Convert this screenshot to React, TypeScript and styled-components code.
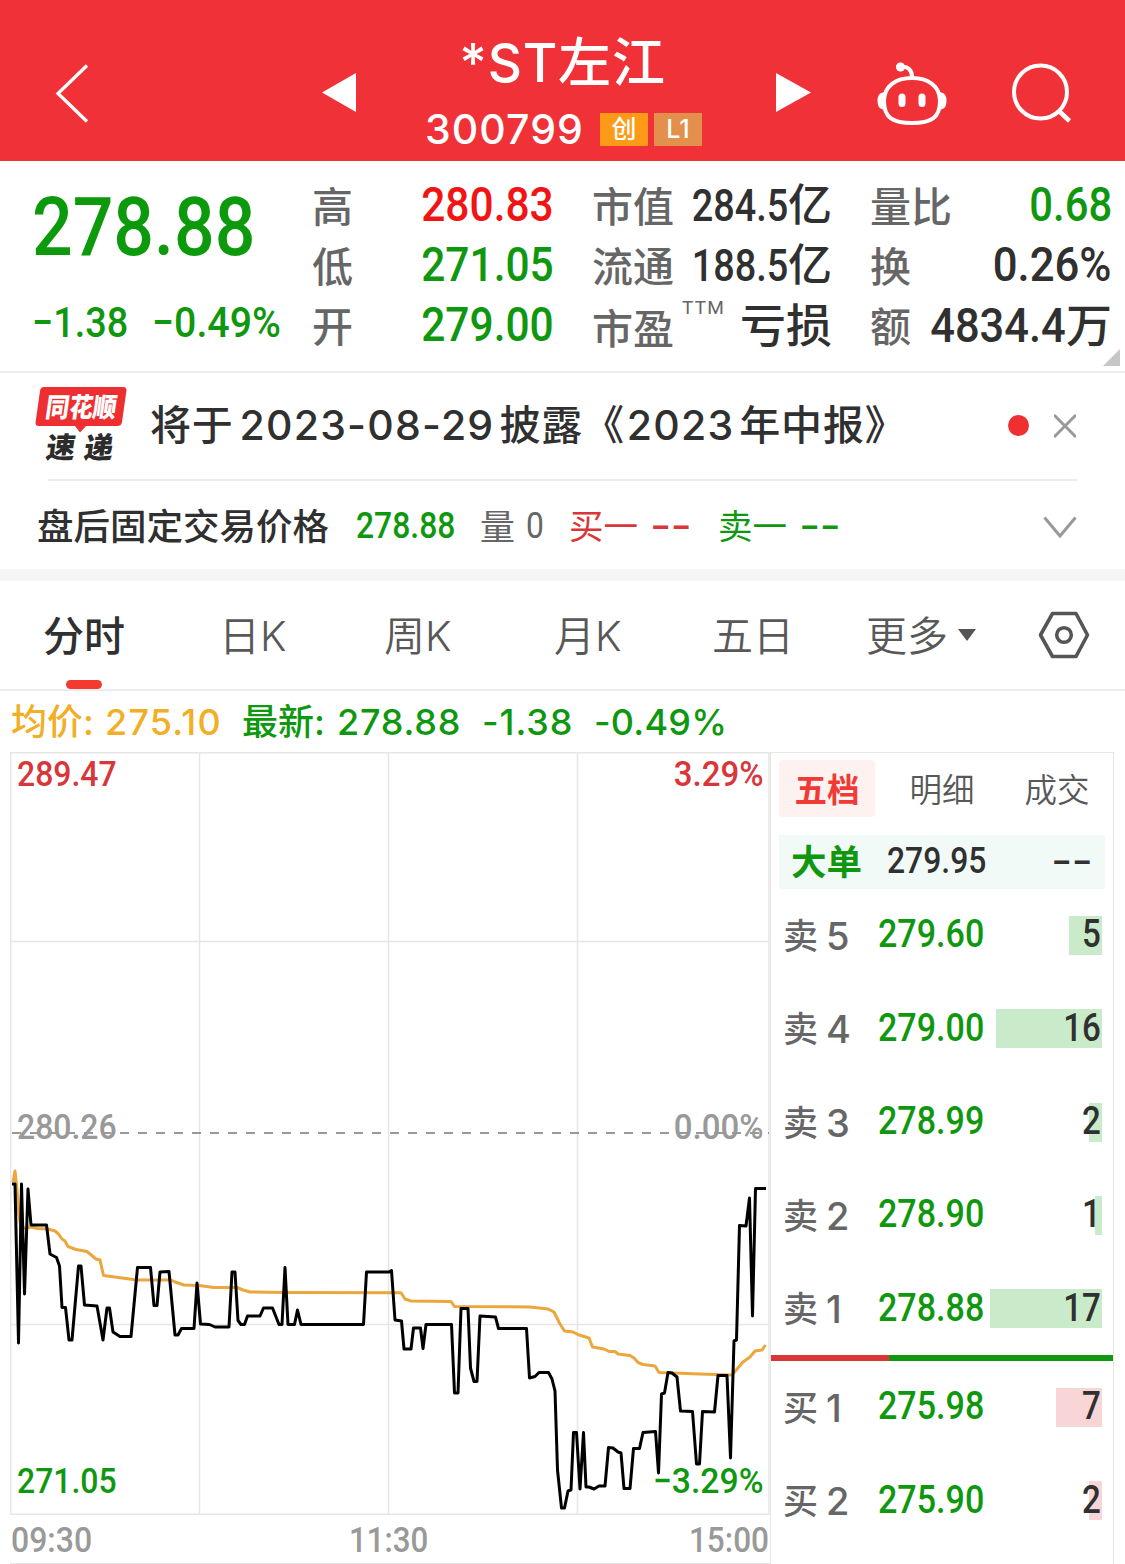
import React from "react";
import styled, { createGlobalStyle } from "styled-components";

const GREEN = "#0f980f";
const RED = "#d9363a";
const INK = "#303030";
const GRAY = "#666666";
const LINE = "#e6e6e6";
const DIN = `Roboto, "Noto Sans CJK SC", sans-serif`;
const SANS = `Inter, "Noto Sans CJK SC", sans-serif`;

const Global = createGlobalStyle`
  * { box-sizing: border-box; }
  body { margin: 0; background: #fff; }
  svg { display: block; flex: none; }
`;

const Screen = styled.main`
  width: 1125px;
  height: 1564px;
  overflow: hidden;
  display: flex;
  flex-direction: column;
  background: #fff;
  color: ${INK};
  font-family: ${SANS};
  white-space: nowrap;
`;

/* Condensed figures used for every quote value */
const Num = styled.span<{ $size: number; $color?: string; $right?: boolean; $sx?: number; $weight?: number }>`
  display: inline-block;
  font-family: ${DIN};
  font-weight: ${(p) => p.$weight ?? 500};
  font-size: ${(p) => p.$size}px;
  line-height: 1.2;
  color: ${(p) => p.$color ?? INK};
  transform: scaleX(${(p) => p.$sx ?? 0.885});
  transform-origin: ${(p) => (p.$right ? "right" : "left")} center;
`;

/* Header */
const Header = styled.header`
  height: 161px;
  flex: none;
  display: flex;
  align-items: flex-start;
  background: #f03138;
  color: #fff;
`;
const HeaderIcon = styled.div<{ $ml: number; $mt: number }>`
  margin: ${(p) => p.$mt}px 0 0 ${(p) => p.$ml}px;
`;
const TitleBlock = styled.div`
  width: 420px;
  display: flex;
  flex-direction: column;
  align-items: center;
  padding-top: 31px;
`;
const Title = styled.h1`
  margin: 0 7px 0 0;
  font-weight: 500;
  font-size: 53px;
  line-height: 64px;
  letter-spacing: 0.8px;
`;
const CodeRow = styled.div`
  display: flex;
  align-items: center;
  height: 34px;
  margin-top: 17px;
  padding-left: 1px;
`;
const Code = styled.span`
  font-size: 41px;
  font-weight: 500;
  letter-spacing: 1.1px;
  margin-right: 16px;
`;
const Badge = styled.span<{ $bg: string }>`
  width: 48px;
  height: 33px;
  margin-right: 6px;
  display: flex;
  align-items: center;
  justify-content: center;
  background: ${(p) => p.$bg};
  font-size: 25px;
  font-weight: 500;
  line-height: 32px;
  padding-bottom: 1px;
`;

/* Quote summary */
const Quote = styled.section`
  height: 212px;
  flex: none;
  position: relative;
  display: grid;
  grid-template-columns: 281px 241px 39px 239px 39px 241px;
  padding: 14px 13px 0 32px;
  border-bottom: 2px solid #ececec;
`;
const PriceCol = styled.div`
  display: flex;
  flex-direction: column;
`;
const BigPrice = styled.div`
  height: 96px;
  padding-top: 3px;
`;
const ChangeRow = styled.div`
  display: flex;
  height: 90px;
  align-items: center;
  padding-top: 14px;
`;
const ChangeCell = styled.span<{ $w: number }>`
  width: ${(p) => p.$w}px;
`;
const StatCol = styled.dl<{ $start: number }>`
  grid-column: ${(p) => p.$start};
  margin: 0;
  display: grid;
  grid-template-rows: repeat(3, 60px);
`;
const StatRow = styled.div`
  display: flex;
  align-items: center;
  justify-content: space-between;
`;
const StatLabel = styled.dt<{ $drop?: boolean }>`
  font-size: 41px;
  line-height: 60px;
  font-weight: 500;
  color: ${GRAY};
  display: flex;
  margin-left: -1px;
  padding-top: ${(p) => (p.$drop ? 7 : 3)}px;
`;
const Ttm = styled.span`
  font-family: ${DIN};
  font-weight: 400;
  font-size: 19px;
  line-height: 22px;
  letter-spacing: 1.2px;
  margin: -2px 0 0 8px;
`;
const StatValue = styled.dd`
  margin: 0;
  display: flex;
  align-items: baseline;
  line-height: 60px;
`;
const Unit = styled.span<{ $size: number }>`
  font-size: ${(p) => p.$size}px;
  line-height: 58px;
  font-weight: 500;
`;
const Corner = styled.i`
  position: absolute;
  right: 5px;
  bottom: 5px;
  border-style: solid;
  border-width: 0 0 17px 17px;
  border-color: transparent transparent #c6c6c6 transparent;
`;

/* News and after-hours strips */
const News = styled.section`
  height: 106px;
  flex: none;
  display: flex;
  align-items: center;
  padding: 0 0 1px 35px;
`;
const NewsText = styled.p`
  margin: -2px 0 0 3px;
  width: 834px;
  font-size: 41px;
  line-height: 60px;
  font-weight: 500;
  letter-spacing: 0.8px;
`;
const Figures = styled.span<{ $before: number; $after: number }>`
  margin: 0 ${(p) => p.$after}px 0 ${(p) => p.$before}px;
  letter-spacing: 1.2px;
`;
const Dot = styled.i`
  width: 21px;
  height: 21px;
  margin: 0 25px 0 24px;
  border-radius: 50%;
  background: #ee3030;
`;
const Divider = styled.hr`
  width: 1029px;
  height: 2px;
  flex: none;
  margin: 0 0 0 48px;
  border: 0;
  background: #ececec;
`;
const AfterHours = styled.section`
  height: 88px;
  flex: none;
  display: flex;
  align-items: center;
  padding: 4px 0 0 37px;
`;
const Strip = styled.span<{ $w: number; $size: number; $color?: string; $weight?: number }>`
  width: ${(p) => p.$w}px;
  display: flex;
  align-items: center;
  font-size: ${(p) => p.$size}px;
  line-height: 60px;
  font-weight: ${(p) => p.$weight ?? 500};
  color: ${(p) => p.$color ?? INK};
`;
const Dashes = styled.span<{ $w: number; $color: string }>`
  width: ${(p) => p.$w}px;
  display: flex;
  color: ${(p) => p.$color};
  font-family: ${DIN};
  font-size: 36px;
  font-weight: 500;
  letter-spacing: 0.5px;
  transform: scaleX(1.6);
  transform-origin: left center;
`;
const Band = styled.div`
  height: 12px;
  flex: none;
  background: #f5f5f5;
`;

/* Period tabs */
const Tabs = styled.nav`
  height: 110px;
  flex: none;
  display: flex;
  padding-left: 43px;
  border-bottom: 2px solid #ececec;
`;
const Tab = styled.div<{ $w: number; $active?: boolean }>`
  width: ${(p) => p.$w}px;
  height: 108px;
  font-size: 41px;
  line-height: 111px;
  font-weight: ${(p) => (p.$active ? 500 : 350)};
  color: ${(p) => (p.$active ? INK : "#585858")};
  display: flex;
`;
const TabLabel = styled.span<{ $active?: boolean }>`
  position: relative;
  height: 108px;
  &::after {
    content: "";
    display: ${(p) => (p.$active ? "block" : "none")};
    position: absolute;
    left: 23px;
    bottom: 0;
    width: 36px;
    height: 9px;
    border-radius: 4.5px;
    background: #f43a30;
  }
`;
const Caret = styled.i`
  margin: 48px 0 0 10px;
  width: 0;
  height: 0;
  border: 9.5px solid transparent;
  border-top: 12px solid #555;
  border-bottom: 0;
`;
const Gear = styled.div`
  padding-top: 30px;
`;

const Legend = styled.div`
  height: 61px;
  flex: none;
  display: flex;
  align-items: center;
  padding-left: 11px;
  font-size: 36px;
  line-height: 60px;
  font-weight: 500;
`;
const LegendItem = styled.span<{ $w: number; $color?: string; $ls?: number }>`
  width: ${(p) => p.$w}px;
  letter-spacing: ${(p) => p.$ls ?? 0}px;
  color: ${(p) => p.$color ?? GREEN};
`;

/* Chart and order book */
const Body = styled.section`
  flex: 1;
  display: flex;
  padding-left: 10px;
`;
const ChartCol = styled.div`
  width: 761px;
  display: flex;
  flex-direction: column;
  border-right: 1px solid ${LINE};
`;
const Plot = styled.div`
  position: relative;
  height: 763px;
`;
const AxisLabel = styled.div<{ $top: number; $right?: boolean }>`
  position: absolute;
  top: ${(p) => p.$top}px;
  ${(p) => (p.$right ? "right: 6px;" : "left: 7px;")}
`;
const Times = styled.div`
  height: 49px;
  display: grid;
  grid-template-columns: 1fr 1fr 1fr;
  align-items: center;
  padding: 3px 1px 0 1px;
  border-bottom: 1px solid ${LINE};
`;
const Time = styled.span<{ $align: string }>`
  text-align: ${(p) => p.$align};
  padding-left: ${(p) => (p.$align === "center" ? 9 : 0)}px;
`;
const Book = styled.aside`
  width: 343px;
  border-top: 1px solid ${LINE};
  border-right: 1px solid ${LINE};
  display: flex;
  flex-direction: column;
`;
const BookTabs = styled.div`
  display: flex;
  margin: 7px 0 0 8px;
  height: 57px;
  flex: none;
`;
const BookTab = styled.span<{ $w: number; $active?: boolean }>`
  width: ${(p) => p.$w}px;
  height: 57px;
  border-radius: 4px;
  text-align: center;
  font-size: 32.5px;
  line-height: 61px;
  font-weight: ${(p) => (p.$active ? 700 : 350)};
  color: ${(p) => (p.$active ? "#f03a35" : "#585858")};
  background: ${(p) => (p.$active ? "#fef2f1" : "transparent")};
`;
const BigOrder = styled.div`
  margin: 18px 0 0 8px;
  width: 326px;
  height: 54px;
  flex: none;
  display: flex;
  align-items: center;
  padding: 0 14px 0 12px;
  background: #f1faf6;
`;
const BigOrderLabel = styled.span`
  width: 96px;
  font-size: 35.5px;
  line-height: 54px;
  padding-top: 2px;
  font-weight: 700;
  color: ${GREEN};
`;
const BigOrderPrice = styled.span`
  flex: 1;
`;
const Levels = styled.div<{ $top: number; $h: number }>`
  padding-top: ${(p) => p.$top}px;
  height: ${(p) => p.$h}px;
  flex: none;
`;
const Level = styled.div`
  height: 93.3px;
  display: flex;
  align-items: flex-start;
  padding-left: 12px;
`;
const LevelLabel = styled.span`
  width: 95px;
  font-size: 35px;
  line-height: 41px;
  color: ${GRAY};
  font-weight: 500;
  display: flex;
  gap: 8px;
`;
const LevelNo = styled.span`
  font-size: 38px;
`;
const LevelPrice = styled.span`
  width: 111px;
  height: 37px;
  display: flex;
  align-items: center;
`;
const Depth = styled.span`
  width: 113px;
  height: 39px;
  display: flex;
  justify-content: flex-end;
`;
const DepthBar = styled.span<{ $sell: boolean }>`
  height: 39px;
  display: flex;
  align-items: center;
  justify-content: flex-end;
  padding: 0 1px 2px 0;
  background: ${(p) => (p.$sell ? "#c9ebc9" : "#f8d5d7")};
`;
const Ratio = styled.div`
  height: 6px;
  flex: none;
  background: linear-gradient(90deg, ${RED} 118px, ${GREEN} 118px);
`;

const PRICE =
  "12,1184 15,1184 18.5,1343 21.5,1184 24.5,1294 28,1189 31,1225 46.5,1225 50,1254 56.5,1257.5 59.5,1266 62,1307.5 65.5,1307.5 69,1340 72,1340 78.5,1266 81,1266 84.5,1305 97,1306 103,1340 107,1308 109.5,1308 113,1332 120,1336.5 131,1336.5 137.5,1267.5 150.5,1267.5 154,1305.5 157,1305.5 160,1272 169,1271.5 175,1335 178,1335 181.5,1328.5 194,1328.5 197,1283 200.5,1324 209.5,1324.5 215,1327 229,1327 232,1272 235,1272 238,1320.5 241,1324.5 244.5,1324.5 247.5,1316 260,1316 263.5,1308 272.5,1308 279,1324.5 282,1324.5 285,1267.5 288,1324.5 294.5,1324.5 297.5,1310 301,1324.5 363.5,1324.5 366.5,1272 389,1272 391.5,1270.5 395,1320 401.5,1321 404,1349 411,1349 413.5,1328 420.5,1328 423,1348.5 426,1324.5 451.5,1324.5 454.5,1393 458,1393 461,1308.5 468,1308.5 470.5,1368 474,1381.5 477,1381.5 480,1316 495.5,1317 498.5,1328.5 526.5,1328.5 529.5,1378 535,1376.5 539,1372.5 548.5,1372.5 552,1379 555,1391 557.5,1470 561.5,1508 564.5,1508 568,1491 571,1490 573.5,1432.5 576.5,1432.5 580,1489 583.5,1432.5 586,1487 589,1487 594,1489 599,1486 605,1486 608.5,1447.5 613,1448 618,1452 621,1453 624,1488.5 630,1488.5 633.5,1448.5 639.5,1448.5 643,1432.5 655.5,1431.5 658.5,1473 661.5,1394 664.5,1393 668,1372.5 672,1373 677,1377 680.5,1411 692.5,1411.5 696.5,1464 699.5,1464 702.5,1411.5 714.5,1412 718,1375.5 727,1375.5 730.5,1458 734,1341 736.5,1340 739.5,1225.5 746,1226 749.5,1198 752.5,1316 755.5,1188.5 766,1188.5";
const AVERAGE =
  "13,1182 15,1171 17,1190 19,1215 21,1228 27,1228 30,1227 38,1228.5 48,1229 55,1231 58.5,1234 62,1239 65,1241 68,1246.5 76,1249.5 87,1251.5 96,1259 100,1260 103.5,1275.5 137,1280 171,1280 175,1282 184,1285 199,1285.5 214,1287.5 237,1287.5 243,1290 250,1292 285,1292.5 401,1292.7 405,1299 411,1301 451,1301.5 454.5,1306.5 530,1307 548,1309 554,1312 560,1324 564.5,1331 573,1332 579,1335 589,1338 592.5,1347 604,1349 609,1351.5 615,1351.5 618,1354 630,1355.5 634,1358 638,1362.5 643,1364.5 655,1366 659,1372.5 700,1374 732,1375 743,1362 750,1357 755,1351 762,1350 765.5,1345";

const SELLS = [
  { no: 5, price: "279.60", lots: 5 },
  { no: 4, price: "279.00", lots: 16 },
  { no: 3, price: "278.99", lots: 2 },
  { no: 2, price: "278.90", lots: 1 },
  { no: 1, price: "278.88", lots: 17 },
];
const BUYS = [
  { no: 1, price: "275.98", lots: 7 },
  { no: 2, price: "275.90", lots: 2 },
];

function BookLevel({ side, no, price, lots }: { side: "卖" | "买"; no: number; price: string; lots: number }) {
  return (
    <Level>
      <LevelLabel>
        {side}
        <LevelNo>{no}</LevelNo>
      </LevelLabel>
      <LevelPrice>
        <Num $size={38.5} $color={GREEN} $sx={0.885}>{price}</Num>
      </LevelPrice>
      <Depth>
        <DepthBar $sell={side === "卖"} style={{ width: lots * 6.6 }}>
          <Num $size={38.5} $sx={0.86} $right>{lots}</Num>
        </DepthBar>
      </Depth>
    </Level>
  );
}

function Stat({ label, children, sup }: { label: string; children: React.ReactNode; sup?: string }) {
  return (
    <StatRow>
      <StatLabel $drop={!!sup}>
        {label}
        {sup && <Ttm>{sup}</Ttm>}
      </StatLabel>
      <StatValue>{children}</StatValue>
    </StatRow>
  );
}

function NewsLogo() {
  return (
    <svg width="112" height="94" viewBox="35 379 112 94">
      <path d="M44 387H123q4 0 3.400 4L122 422q-.6 4-4.600 4H86l-6 6.500-5-6.500H39q-4 0-3.400-4L40 391q.6-4 4-4z" fill="#ee2f31" />
      <g fontFamily='"Noto Sans CJK SC", sans-serif' fontWeight="900">
        <text transform="translate(44.500 416.500) skewX(-8)" fontSize="27" textLength="71" lengthAdjust="spacingAndGlyphs" fill="#fff">同花顺</text>
        <text transform="translate(45 458) skewX(-8)" fontSize="29" textLength="67" lengthAdjust="spacing" fill="#2c2c2c">速递</text>
      </g>
    </svg>
  );
}

export default function App() {
  return (
    <Screen>
      <Global />
      <Header>
        <HeaderIcon $ml={54} $mt={62}>
          <svg width="36" height="62" viewBox="54 62 36 62" fill="none" stroke="#fff" strokeWidth="3.300">
            <path d="M87 65.500 58 93.500 87 121.500" />
          </svg>
        </HeaderIcon>
        <HeaderIcon $ml={232} $mt={73}>
          <svg width="34" height="39" viewBox="0 0 34 39"><path d="M0 19.500 34 0V39z" fill="#fff" /></svg>
        </HeaderIcon>
        <TitleBlock>
          <Title>*ST左江</Title>
          <CodeRow>
            <Code>300799</Code>
            <Badge $bg="#fd9a18">创</Badge>
            <Badge $bg="#e2904b">L1</Badge>
          </CodeRow>
        </TitleBlock>
        <HeaderIcon $ml={0} $mt={73}>
          <svg width="35" height="39" viewBox="0 0 35 39"><path d="M35 19.500 0 0V39z" fill="#fff" /></svg>
        </HeaderIcon>
        <HeaderIcon $ml={65} $mt={60}>
          <svg width="72" height="68" viewBox="876 60 72 68" fill="none" stroke="#fff" strokeWidth="4">
            <path d="M912 78c16 0 28 8 28 23 0 17-9 22-28 22s-28-5-28-22c0-15 12-23 28-23z" />
            <path d="M901 67c7-1 11 3 11 10" />
            <path d="M883 94c-3 .5-4 4-4 7s1 6.500 4 7zM941 94c3 .5 4 4 4 7s-1 6.500-4 7z" strokeWidth="3" fill="#fff" />
            <circle cx="900.500" cy="67" r="4.600" fill="#fff" stroke="none" />
            <path d="M902 97v6.500M922 97v6.500" strokeWidth="7" strokeLinecap="round" />
          </svg>
        </HeaderIcon>
        <HeaderIcon $ml={62} $mt={62}>
          <svg width="64" height="62" viewBox="1010 62 64 62" fill="none" stroke="#fff" strokeWidth="4">
            <circle cx="1040.500" cy="92" r="26.500" />
            <path d="M1059 111 1069.500 121" strokeWidth="4.500" />
          </svg>
        </HeaderIcon>
      </Header>

      <Quote>
        <PriceCol>
          <BigPrice>
            <Num $size={82} $color="#0c9a0c" $sx={0.873}>278.88</Num>
          </BigPrice>
          <ChangeRow>
            <ChangeCell $w={120}><Num $size={42} $color={GREEN} $sx={0.9}>−1.38</Num></ChangeCell>
            <ChangeCell $w={130}><Num $size={42} $color={GREEN} $sx={0.935}>−0.49%</Num></ChangeCell>
          </ChangeRow>
        </PriceCol>
        <StatCol $start={2}>
          <Stat label="高"><Num $size={48} $color="#f01414" $right>280.83</Num></Stat>
          <Stat label="低"><Num $size={48} $color={GREEN} $right>271.05</Num></Stat>
          <Stat label="开"><Num $size={48} $color={GREEN} $right>279.00</Num></Stat>
        </StatCol>
        <StatCol $start={4}>
          <Stat label="市值"><Num $size={44} $sx={0.86} $right>284.5</Num><Unit $size={44}>亿</Unit></Stat>
          <Stat label="流通"><Num $size={44} $sx={0.86} $right>188.5</Num><Unit $size={44}>亿</Unit></Stat>
          <Stat label="市盈" sup="TTM"><Unit $size={46}>亏损</Unit></Stat>
        </StatCol>
        <StatCol $start={6}>
          <Stat label="量比"><Num $size={48} $color={GREEN} $sx={0.87} $right>0.68</Num></Stat>
          <Stat label="换"><Num $size={48} $sx={0.91} $right>0.26%</Num></Stat>
          <Stat label="额"><Num $size={48} $sx={0.905} $right>4834.4</Num><Unit $size={46}>万</Unit></Stat>
        </StatCol>
        <Corner />
      </Quote>

      <News>
        <NewsLogo />
        <NewsText>
          将于<Figures $before={6} $after={5}>2023-08-29</Figures>披露《<Figures $before={2} $after={5}>2023</Figures>年中报》
        </NewsText>
        <Dot />
        <svg width="22" height="24" viewBox="0 0 22 24" stroke="#999" strokeWidth="3"><path d="M0 1 22 23M22 1 0 23" /></svg>
      </News>
      <Divider />
      <AfterHours>
        <Strip $w={319} $size={36.5}>盘后固定交易价格</Strip>
        <Strip $w={124} $size={36}><Num $size={36} $color={GREEN}>278.88</Num></Strip>
        <Strip $w={46} $size={35} $color={GRAY} $weight={400}>量</Strip>
        <Strip $w={43} $size={36}><Num $size={36} $color={GRAY} $weight={400}>0</Num></Strip>
        <Strip $w={82} $size={34.5} $color={RED} $weight={400}>买一</Strip>
        <Dashes $w={67} $color={RED}>--</Dashes>
        <Strip $w={82} $size={34.5} $color={GREEN} $weight={400}>卖一</Strip>
        <Dashes $w={243} $color={GREEN}>--</Dashes>
        <svg width="34" height="22" viewBox="0 0 34 22" fill="none" stroke="#999" strokeWidth="3"><path d="M1.500 1.500 17 20 32.500 1.500" /></svg>
      </AfterHours>
      <Band />

      <Tabs>
        <Tab $w={176} $active><TabLabel $active>分时</TabLabel></Tab>
        <Tab $w={165}><TabLabel>日K</TabLabel></Tab>
        <Tab $w={170}><TabLabel>周K</TabLabel></Tab>
        <Tab $w={158}><TabLabel>月K</TabLabel></Tab>
        <Tab $w={154}><TabLabel>五日</TabLabel></Tab>
        <Tab $w={172}><TabLabel>更多</TabLabel><Caret /></Tab>
        <Gear>
          <svg width="52" height="48" viewBox="0 0 52 48" fill="none" stroke="#555" strokeWidth="3.600">
            <path d="M14.500 2.500H38L49.500 24 38 45.500H14.500L2.500 24z" strokeLinejoin="round" />
            <circle cx="26" cy="24" r="7.300" />
          </svg>
        </Gear>
      </Tabs>

      <Legend>
        <LegendItem $w={94} $color="#f2ae24">均价:</LegendItem>
        <LegendItem $w={137} $color="#f2ae24" $ls={1.2}>275.10</LegendItem>
        <LegendItem $w={95}>最新:</LegendItem>
        <LegendItem $w={145} $ls={0.8}>278.88</LegendItem>
        <LegendItem $w={112} $ls={0.9}>-1.38</LegendItem>
        <LegendItem $w={140} $ls={0.2}>-0.49%</LegendItem>
      </Legend>

      <Body>
        <ChartCol>
          <Plot>
            <svg width="760" height="763" viewBox="10 752 760 763" fill="none">
              <g stroke={LINE} strokeWidth="1.500">
                <path d="M10.700 752.700H769V1514.300H10.700z" />
                <path d="M199.500 752V1514M388.500 752V1514M577.500 752V1514M11 941.500H769M11 1324.500H769" />
              </g>
              <path d="M12 1133H769" stroke="#777" strokeWidth="1.500" strokeDasharray="9 9" />
              <polyline points={AVERAGE} stroke="#eba63c" strokeWidth="3" strokeLinejoin="round" />
              <polyline points={PRICE} stroke="#000" strokeWidth="3" strokeLinejoin="round" />
            </svg>
            <AxisLabel $top={1}><Num $size={35.5} $color={RED} $sx={0.9}>289.47</Num></AxisLabel>
            <AxisLabel $top={1} $right><Num $size={35.5} $color={RED} $sx={0.93} $right>3.29%</Num></AxisLabel>
            <AxisLabel $top={354}><Num $size={35.5} $color="#999" $sx={0.9}>280.26</Num></AxisLabel>
            <AxisLabel $top={354} $right><Num $size={35.5} $color="#999" $sx={0.93} $right>0.00%</Num></AxisLabel>
            <AxisLabel $top={708}><Num $size={35.5} $color={GREEN} $sx={0.9}>271.05</Num></AxisLabel>
            <AxisLabel $top={708} $right><Num $size={35.5} $color={GREEN} $sx={0.95} $right>−3.29%</Num></AxisLabel>
          </Plot>
          <Times>
            <Time $align="left"><Num $size={35.5} $color="#999" $sx={0.9}>09:30</Num></Time>
            <Time $align="center"><Num $size={35.5} $color="#999" $sx={0.88}>11:30</Num></Time>
            <Time $align="right"><Num $size={35.5} $color="#999" $sx={0.89} $right>15:00</Num></Time>
          </Times>
        </ChartCol>
        <Book>
          <BookTabs>
            <BookTab $w={96} $active>五档</BookTab>
            <BookTab $w={134}>明细</BookTab>
            <BookTab $w={96}>成交</BookTab>
          </BookTabs>
          <BigOrder>
            <BigOrderLabel>大单</BigOrderLabel>
            <BigOrderPrice><Num $size={36}>279.95</Num></BigOrderPrice>
            <Dashes $w={39} $color={INK}>--</Dashes>
          </BigOrder>
          <Levels $top={27} $h={466}>
            {SELLS.map((l) => <BookLevel key={l.no} side="卖" {...l} />)}
          </Levels>
          <Ratio />
          <Levels $top={27} $h={203}>
            {BUYS.map((l) => <BookLevel key={l.no} side="买" {...l} />)}
          </Levels>
        </Book>
      </Body>
    </Screen>
  );
}
